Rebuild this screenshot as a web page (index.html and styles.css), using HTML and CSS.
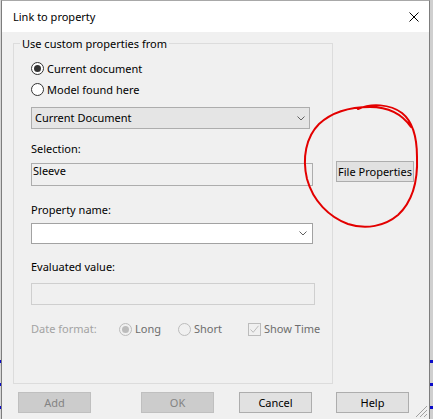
FILE: index.html
```html
<!DOCTYPE html>
<html lang="en">
<head>
<meta charset="utf-8">
<title>Link to property</title>
<link rel="stylesheet" href="styles.css">
</head>
<body>
<div class="screen">
  <div class="edge edge-left">
    <span class="mark m1"></span><span class="mark"></span><span class="mark"></span>
  </div>
  <div class="dialog">
    <div class="titlebar">
      <span class="title">Link to property</span>
      <svg class="close" width="10" height="10" viewBox="0 0 10 10"><path d="M0.5 0.5L9.5 9.5M9.5 0.5L0.5 9.5" stroke="#000" stroke-width="1" fill="none"/></svg>
    </div>
    <div class="body">
      <div class="main">
        <fieldset class="group">
          <legend>Use custom properties from</legend>
          <div class="group-body">
            <label class="radio-row"><span class="radio checked"></span><span class="opt-text">Current document</span></label>
            <label class="radio-row"><span class="radio"></span><span class="opt-text">Model found here</span></label>
            <div class="combo combo-doc">
              <span>Current Document</span>
              <svg class="chev" width="8" height="5" viewBox="0 0 8 5"><path d="M0.5 0.5L4 4L7.5 0.5" stroke="#606060" fill="none"/></svg>
            </div>
            <div class="label lbl-selection">Selection:</div>
            <div class="textbox selection">Sleeve</div>
            <div class="label lbl-prop">Property name:</div>
            <div class="combo combo-prop">
              <span></span>
              <svg class="chev" width="8" height="5" viewBox="0 0 8 5"><path d="M0.5 0.5L4 4L7.5 0.5" stroke="#606060" fill="none"/></svg>
            </div>
            <div class="label lbl-eval">Evaluated value:</div>
            <div class="textbox evaluated"></div>
            <div class="date-row">
              <span class="date-label">Date format:</span>
              <span class="opt opt-long"><span class="radio disabled checked"></span><span class="opt-text">Long</span></span>
              <span class="opt opt-short"><span class="radio disabled"></span><span class="opt-text">Short</span></span>
              <span class="opt opt-time"><span class="check">
                <svg width="11" height="11" viewBox="0 0 11 11"><path d="M1.5 5.5L4.2 8.3L9.5 1.8" stroke="#bcbcbc" stroke-width="1" fill="none"/></svg>
              </span><span class="opt-text">Show Time</span></span>
            </div>
          </div>
        </fieldset>
        <div class="side">
          <button class="btn file-props">File Properties</button>
        </div>
      </div>
      <div class="footer">
        <button class="btn disabled b-add">Add</button>
        <button class="btn disabled b-ok">OK</button>
        <button class="btn b-cancel">Cancel</button>
        <button class="btn b-help">Help</button>
      </div>
    </div>
    <svg class="grip" width="14" height="14" viewBox="0 0 14 14">
      <path d="M13 2L2 13M13 6L6 13M13 10L10 13" stroke="#a0a0a0" stroke-width="1" fill="none"/>
    </svg>
  </div>
  <div class="edge edge-right">
    <span class="mark m1"></span><span class="mark"></span><span class="mark"></span>
  </div>
  <svg class="annotation" width="433" height="419" viewBox="0 0 433 419">
    <path d="M358 109 C371 103 390 104 402 113 C412 121 417 137 417 157 C418 183 411 203 398 215 C385 226 366 230 348 224 C329 217 313 201 307 179 C302 158 306 137 319 124 C332 112 350 107 370 107 C388 107 402 114 411 127" stroke="#e30000" stroke-width="2" fill="none" stroke-linecap="round"/>
  </svg>
</div>
</body>
</html>
```
FILE: styles.css
```css
* { box-sizing: border-box; }
html, body { margin: 0; padding: 0; }
body {
  font-family: "Noto Sans", "DejaVu Sans", sans-serif;
  font-size: 11px;
  line-height: 16px;
  color: #000;
  background: #d6d6d6;
}
.screen {
  position: relative;
  display: flex;
  width: 433px;
  height: 419px;
  overflow: hidden;
}
.edge {
  display: flex;
  flex-direction: column;
  background: #d6d6d6;
}
.edge-left { width: 1px; }
.edge-right { width: 3px; background: #cfcfcf; }
.mark { display: block; height: 3px; background: #0a0ac8; margin-top: 20px; }
.mark.m1 { margin-top: 360px; }

.dialog {
  position: relative;
  width: 429px;
  display: flex;
  flex-direction: column;
  background: #f0f0f0;
  border: 1px solid #7d7d7d;
  border-top-color: #a8a8a8;
  border-bottom: none;
}
.titlebar {
  height: 31px;
  background: #fff;
  display: flex;
  align-items: center;
  justify-content: space-between;
  padding: 1px 10px 0 11px;
}
.title { font-size: 11px; }
.close { display: block; margin-top: -1px; }

.body { flex: 1; display: flex; flex-direction: column; }
.main { display: flex; padding-left: 11px; margin-top: 2px; }

.group {
  width: 320px;
  height: 350px;
  margin: 0;
  padding: 0;
  border: 1px solid #dcdcdc;
  min-width: 0;
}
.group legend {
  margin-left: 6px;
  padding: 2px 2px 0;
  line-height: 16px;
}
.group-body { padding: 6px 0 0 17px; }

.radio-row {
  display: flex;
  align-items: center;
  height: 21px;
}
.radio {
  width: 13px;
  height: 13px;
  border: 1px solid #333;
  border-radius: 50%;
  background: #fff;
  display: flex;
  align-items: center;
  justify-content: center;
  flex: none;
}
.radio.checked::after {
  content: "";
  width: 7px;
  height: 7px;
  border-radius: 50%;
  background: #333;
}
.radio.disabled { border-color: #bcbcbc; background: #f0f0f0; }
.radio.disabled.checked::after { background: #bcbcbc; }
.opt-text { margin-left: 3px; }

.combo {
  display: flex;
  align-items: center;
  justify-content: space-between;
  border: 1px solid #adadad;
}
.combo .chev { display: block; }
.combo-doc {
  margin-top: 7px;
  width: 279px;
  height: 22px;
  background: #e5e5e5;
  padding: 0 4px 0 3px;
}
.combo-prop {
  margin-top: 5px;
  width: 282px;
  height: 21px;
  background: #fff;
  border-color: #a2a2a2;
  padding: 0 5px 0 3px;
}

.label { height: 16px; }
.lbl-selection { margin-top: 12px; }
.lbl-prop { margin-top: 16px; }
.lbl-eval { margin-top: 15px; }

.textbox { border: 1px solid #adadad; background: #f0f0f0; }
.selection {
  margin-top: 6px;
  width: 282px;
  height: 23px;
  padding: 0 1px;
  line-height: 14px;
}
.evaluated {
  margin-top: 8px;
  width: 284px;
  height: 22px;
  border-color: #cfcfcf;
}

.date-row {
  display: flex;
  align-items: center;
  height: 16px;
  margin-top: 16px;
  color: #6d6d6d;
}
.date-label { width: 88px; color: #a3a3a3; }
.opt { display: flex; align-items: center; }
.opt-long { width: 59px; }
.opt-short { width: 70px; }
.check {
  width: 13px;
  height: 13px;
  border: 1px solid #bcbcbc;
  display: flex;
  align-items: center;
  justify-content: center;
  flex: none;
}
.check svg { display: block; }

.side { padding-left: 3px; }
.btn {
  font: inherit;
  font-size: 11px;
  line-height: 16px;
  color: #000;
  background: #e1e1e1;
  border: 1px solid #adadad;
  border-radius: 0;
  padding: 0;
  height: 21px;
  width: 73px;
  margin: 0;
}
.btn.disabled { background: #cccccc; border-color: #bfbfbf; color: #838383; }
.file-props { margin-top: 127px; width: 78px; height: 21px; }

.footer {
  display: flex;
  padding-left: 16px;
  margin-top: 8px;
}
.b-ok { margin-left: 50px; }
.b-cancel { margin-left: 25px; }
.b-help { margin-left: 24px; }

.grip { position: absolute; right: 1px; bottom: 1px; }
.annotation { position: absolute; left: 0; top: 0; pointer-events: none; }
```
